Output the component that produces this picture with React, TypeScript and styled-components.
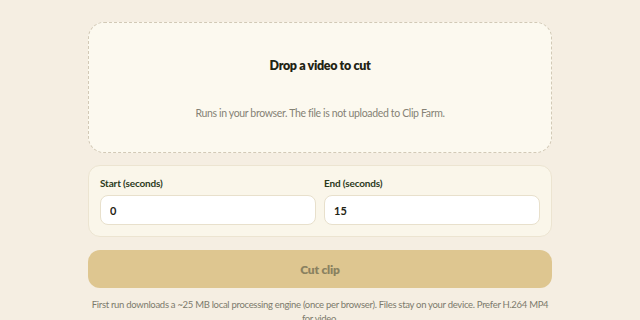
import styled, { createGlobalStyle } from "styled-components";

const GlobalStyle = createGlobalStyle`
  html, body {
    margin: 0;
    padding: 0;
    background: #f5eee2;
    font-family: "Lato", "Noto Sans", sans-serif;
  }
`;

const Page = styled.main`
  width: 464px;
  margin: 0 auto;
  padding-top: 22px;
  display: flex;
  flex-direction: column;
`;

const DropZone = styled.div`
  height: 131px;
  box-sizing: border-box;
  border: 1px dashed #d2c9b6;
  border-radius: 16px;
  background: #fcf9ef;
  display: flex;
  flex-direction: column;
  align-items: center;
  padding-top: 35px;
`;

const DropTitle = styled.h2`
  margin: 0;
  font-size: 12.5px;
  font-weight: 800;
  color: #1f2414;
  letter-spacing: -0.35px;
`;

const DropHint = styled.p`
  margin: 34px 0 0;
  font-size: 10.5px;
  letter-spacing: -0.35px;
  color: #858275;
`;

const Fields = styled.div`
  margin-top: 12px;
  height: 72px;
  box-sizing: border-box;
  border: 1px solid #ece4d1;
  border-radius: 12px;
  background: #faf6ea;
  padding: 11px 11px 0;
  display: grid;
  grid-template-columns: 1fr 1fr;
  gap: 8px;
`;

const Field = styled.label`
  display: flex;
  flex-direction: column;
  gap: 6px;
`;

const Label = styled.span`
  font-size: 10px;
  font-weight: 700;
  letter-spacing: -0.15px;
  color: #2c3a1c;
`;

const Input = styled.input`
  height: 30px;
  box-sizing: border-box;
  border: 1px solid #e8e0cc;
  border-radius: 8px;
  background: #ffffff;
  padding: 0 9px;
  font-family: inherit;
  font-size: 11px;
  font-weight: 700;
  color: #1f2414;
  outline: none;
`;

const CutButton = styled.button`
  margin-top: 13px;
  height: 38px;
  border: none;
  border-radius: 12px;
  background: #dec690;
  color: #8a8160;
  font-family: inherit;
  font-size: 12px;
  font-weight: 800;
  letter-spacing: -0.2px;
`;

const Footnote = styled.p`
  margin: 10px 0 0;
  font-size: 9.5px;
  line-height: 14px;
  letter-spacing: -0.3px;
  color: #7c7a6c;
  text-align: center;
`;

export default function App() {
  return (
    <>
      <GlobalStyle />
      <Page>
        <DropZone>
          <DropTitle>Drop a video to cut</DropTitle>
          <DropHint>Runs in your browser. The file is not uploaded to Clip Farm.</DropHint>
        </DropZone>
        <Fields>
          <Field>
            <Label>Start (seconds)</Label>
            <Input defaultValue="0" />
          </Field>
          <Field>
            <Label>End (seconds)</Label>
            <Input defaultValue="15" />
          </Field>
        </Fields>
        <CutButton disabled>Cut clip</CutButton>
        <Footnote>
          First run downloads a ~25 MB local processing engine (once per browser). Files stay on your device. Prefer H.264 MP4
          for video.
        </Footnote>
      </Page>
    </>
  );
}
